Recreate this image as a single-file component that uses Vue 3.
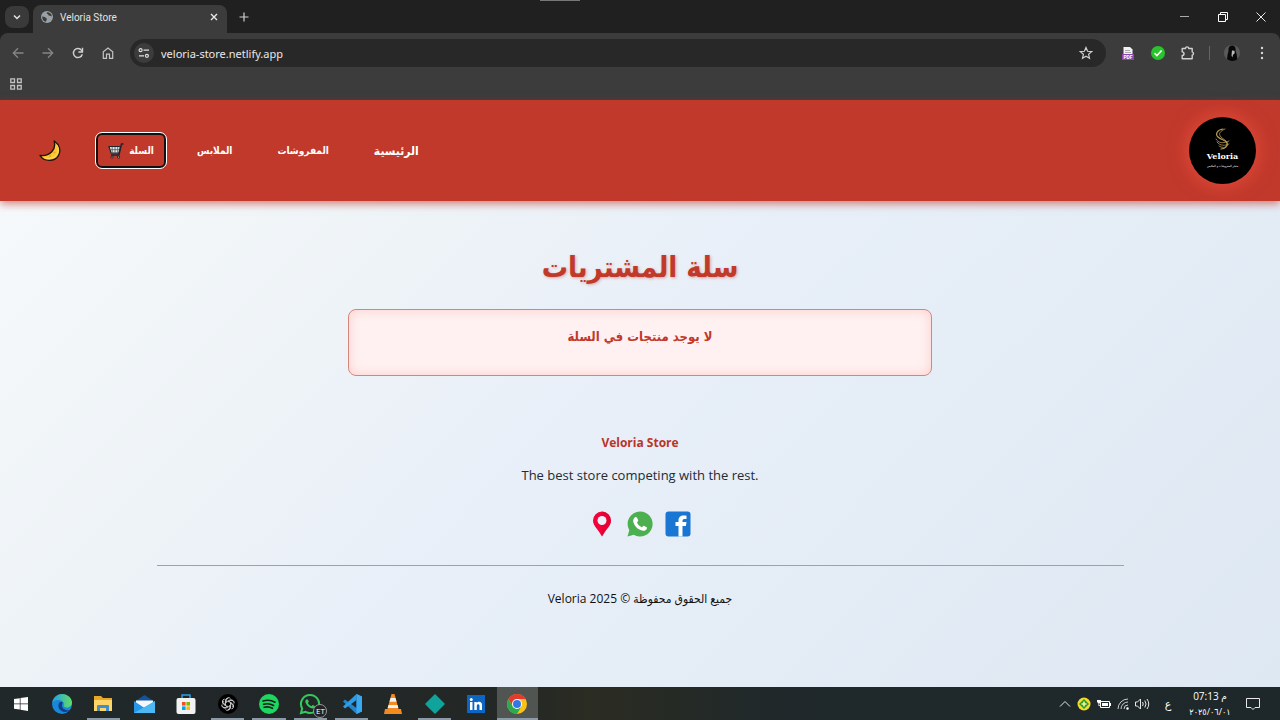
<script setup>
import { ref } from 'vue';

// browser chrome
const tabTitle = 'Veloria Store';
const url = ref('veloria-store.netlify.app');

// links after the cart button, left to right
const links = [
  { id: 'clothes', text: 'الملابس' },
  { id: 'furniture', text: 'المفروشات' },
  { id: 'home', text: 'الرئيسية' }
];

// taskbar apps
const apps = [
  { id: 'start', label: 'Start' },
  { id: 'edge', label: 'Edge' },
  { id: 'files', label: 'File Explorer', open: true },
  { id: 'mail', label: 'Mail' },
  { id: 'store', label: 'Store' },
  { id: 'gpt', label: 'ChatGPT', open: true },
  { id: 'spotify', label: 'Spotify', open: true },
  { id: 'whatsapp', label: 'WhatsApp', open: true },
  { id: 'code', label: 'VS Code', open: true },
  { id: 'vlc', label: 'VLC' },
  { id: 'diamond', label: 'Diamond', open: true },
  { id: 'linkedin', label: 'LinkedIn' },
  { id: 'chrome', label: 'Chrome', open: true, active: true }
];
</script>

<template>
  <div class="screen">
    <div class="tab-strip">
      <button class="tab-search" aria-label="Search tabs">
        <svg width="10" height="10" viewBox="0 0 10 10"><path d="M2 3.5l3 3 3-3" fill="none" stroke="#e3e3e3" stroke-width="1.5" /></svg>
      </button>
      <div class="tab">
        <svg width="12" height="12" viewBox="0 0 12 12">
          <circle cx="6" cy="6" r="6" fill="#9aa0a6" />
          <path d="M1.2 5.2c1 .8 2.6.2 3.2 1.2s1.6.6 1.4 2-1 1.2-.8 2.4C2.600 10.600 1 8.400 1.200 5.200zM6.200 1.200c-.8.8-.6 1.600.4 1.800s.2 1.400 1.400 1.600 1.400 1 2.800.6c0-2-2-4-4.600-4z" fill="#3c3c3c" />
        </svg>
        <span class="tab-title">{{ tabTitle }}</span>
        <button class="icon-btn" aria-label="Close tab">
          <svg width="8" height="8" viewBox="0 0 8 8"><path d="M1 1l6 6M7 1L1 7" stroke="#e8e8e8" stroke-width="1.400" /></svg>
        </button>
      </div>
      <button class="icon-btn new-tab" aria-label="New tab">
        <svg width="10" height="10" viewBox="0 0 10 10"><path d="M5 .5v9M.5 5h9" stroke="#d0d0d0" stroke-width="1.200" /></svg>
      </button>
      <div class="window-controls">
        <button class="icon-btn" aria-label="Minimize">
          <svg width="10" height="10" viewBox="0 0 10 10"><path d="M0 4.500h9" stroke="#aaa" /></svg>
        </button>
        <button class="icon-btn" aria-label="Restore">
          <svg width="10" height="10" viewBox="0 0 10 10"><path d="M.5 2.500h7v7h-7zM2.500 2.500v-2h7v7h-2" fill="none" stroke="#fff" /></svg>
        </button>
        <button class="icon-btn" aria-label="Close">
          <svg width="10" height="10" viewBox="0 0 10 10"><path d="M.5.5l9 9M9.500.5l-9 9" stroke="#e8e8e8" /></svg>
        </button>
      </div>
      <span class="grip"></span>
    </div>

    <div class="chrome-bar">
      <div class="toolbar">
        <div class="nav-buttons">
          <button class="icon-btn" aria-label="Back">
            <svg width="12" height="12" viewBox="0 0 12 12"><path d="M11.500 6H1.500M6 1.300L1.300 6 6 10.700" fill="none" stroke="#858585" stroke-width="1.300" /></svg>
          </button>
          <button class="icon-btn" aria-label="Forward">
            <svg width="12" height="12" viewBox="0 0 12 12"><path d="M.5 6h10M6 1.300L10.700 6 6 10.700" fill="none" stroke="#858585" stroke-width="1.300" /></svg>
          </button>
          <button class="icon-btn" aria-label="Reload">
            <svg width="12" height="12" viewBox="0 0 12 12">
              <path d="M10.300 7.200A4.500 4.500 0 1 1 9.600 3.400L10.500 4.500" fill="none" stroke="#d0d0d0" stroke-width="1.400" />
              <path d="M10.500.8v4.200H6.400" fill="none" stroke="#d0d0d0" stroke-width="1.400" />
            </svg>
          </button>
          <button class="icon-btn" aria-label="Home">
            <svg width="12" height="12" viewBox="0 0 12 12"><path d="M1.300 11.300V4.800L6 1l4.700 3.800v6.500H7.500V7.200h-3v4.100z" fill="none" stroke="#c4c4c4" stroke-width="1.200" /></svg>
          </button>
        </div>
        <div class="address">
          <button class="site-info" aria-label="Site information">
            <svg width="12" height="12" viewBox="0 0 12 12">
              <path d="M5.500 3.200H11M1 8.800h5" stroke="#e0e0e0" stroke-width="1.300" />
              <circle cx="2.600" cy="3.200" r="1.500" fill="none" stroke="#e0e0e0" stroke-width="1.200" />
              <circle cx="8.900" cy="8.800" r="1.500" fill="none" stroke="#e0e0e0" stroke-width="1.200" />
            </svg>
          </button>
          <input v-model="url" class="url" type="text" aria-label="Address" />
          <button class="icon-btn" aria-label="Bookmark">
            <svg width="14" height="14" viewBox="0 0 14 14"><path d="M7 1.500l1.600 3.800 4.100.3-3.100 2.700.9 4L7 10.200l-3.500 2.100.9-4-3.100-2.700 4.100-.3z" fill="none" stroke="#d0d0d0" stroke-width="1.200" /></svg>
          </button>
        </div>
        <div class="extensions">
          <button class="icon-btn" aria-label="PDF">
            <svg width="12" height="14" viewBox="0 0 12 14">
              <path d="M1.500 1H8l2.500 2.500V8h-9z" fill="#f4f2f6" />
              <path d="M3 4.500h5M3 6.500h6" stroke="#aaa" />
              <rect y="8" width="12" height="6" fill="#8e44ad" />
              <text x="6" y="13" text-anchor="middle" font-size="5" font-weight="700" font-family="Roboto, sans-serif" fill="#fff">PDF</text>
            </svg>
          </button>
          <button class="icon-btn" aria-label="Checker">
            <svg width="14" height="14" viewBox="0 0 14 14"><circle cx="7" cy="7" r="7" fill="#27c42b" /><path d="M3.500 7.200l2.400 2.300 4.700-5" fill="none" stroke="#fff" stroke-width="1.700" /></svg>
          </button>
          <button class="icon-btn" aria-label="Extensions">
            <svg width="14" height="14" viewBox="0 0 14 14"><path d="M1.200 2.500h3.300a1.600 1.600 0 0 1 3.200 0h3.500v3.400a1.700 1.700 0 0 1 0 3.300v3.600h-10V9.500a1.800 1.800 0 0 0 0-3.600z" fill="none" stroke="#d0d0d0" stroke-width="1.400" stroke-linejoin="round" /></svg>
          </button>
          <span class="divider"></span>
          <button class="icon-btn" aria-label="Profile">
            <svg width="16" height="16" viewBox="0 0 16 16">
              <circle cx="8" cy="8" r="8" fill="#5a5a5a" />
              <path d="M4.500 6C4 2 6 .5 8.200.5S12 2 11.600 6l1 3 .8 5.200A8 8 0 0 1 3 14l.5-4z" fill="#080808" />
              <path d="M8 5.500l2.500.2.200 2.600-1.700 1.400-.7 2.800-.8-2z" fill="#bbb" />
            </svg>
          </button>
          <button class="icon-btn" aria-label="Menu">
            <svg width="4" height="14" viewBox="0 0 4 14" fill="#d8d8d8"><circle cx="2" cy="2" r="1.200" /><circle cx="2" cy="7" r="1.200" /><circle cx="2" cy="12" r="1.200" /></svg>
          </button>
        </div>
      </div>
      <div class="bookmarks">
        <button class="icon-btn" aria-label="Apps">
          <svg width="12" height="12" viewBox="0 0 12 12" fill="none" stroke="#c4c4c4" stroke-width="1.300"><path d="M.8.8h3.700v3.700H.8zM7.500.8h3.700v3.700H7.500zM.8 7.500h3.700v3.700H.8zM7.500 7.500h3.700v3.700H7.500z" /></svg>
        </button>
      </div>
    </div>

    <header class="site-header">
      <nav class="menu">
        <button class="theme" aria-label="الوضع الليلي">
          <svg width="22" height="22" viewBox="0 0 22 22">
            <path d="M15.200 1c5 3.200 7.300 9.500 4.200 14.600C16 21.500 5.500 22.500 1 15.500c4.500.6 8.800-.6 11.800-3.700 2.900-3 3.400-6.800 2.400-10.800z" fill="#fcc62f" stroke="#1c1208" stroke-width="1.300" stroke-linejoin="round" />
            <path d="M18 5c2 3.500 1.600 7.500-.8 10.300-2.600 2.900-7 4-11 3" fill="none" stroke="#f9d976" stroke-width="1" />
            <circle cx="15.500" cy="12.500" r="1" fill="#e8a51c" /><circle cx="11" cy="16" r="1" fill="#e8a51c" />
          </svg>
        </button>
        <button class="cart-btn" dir="rtl">
          <span>السلة</span>
          <svg width="16" height="16" viewBox="0 0 16 16">
            <path d="M1 3.500h11.500l-1.500 6.500H3z" fill="#e2e6e9" stroke="#222529" stroke-width="1.200" />
            <path d="M4.200 4v6M7 4v6M9.700 4v6M1.500 6.700h10.500" stroke="#50565b" stroke-width=".8" />
            <path d="M15.500 1h-2l-2.600 11H3" fill="none" stroke="#222529" stroke-width="1.500" />
            <circle cx="4" cy="14" r="1.500" fill="#222529" /><circle cx="10.500" cy="14" r="1.500" fill="#222529" />
            <circle cx="4" cy="14" r=".6" fill="#ddd" /><circle cx="10.500" cy="14" r=".6" fill="#ddd" />
          </svg>
        </button>
        <a v-for="link in links" :key="link.id" href="#" class="link" :class="link.id" dir="rtl">{{ link.text }}</a>
      </nav>
      <div class="logo">
        <svg class="logo-mark" width="18" height="22" viewBox="0 0 18 22" fill="none" stroke="#b89a58" stroke-linecap="round">
          <path d="M9 1C3 2 1 6 4 9s8 3 9 6-2 6-6 6" stroke-width="1.200" />
          <path d="M11 1C6 3 4 6 7 9s8 4 6 9" stroke-width=".8" />
          <path d="M2 11c2 4 7 5 13 2M3 14c3 4 8 4 12 2M5 18c3 2 6 2 8 0" stroke-width=".8" />
        </svg>
        <span class="logo-name">Veloria</span>
        <span class="logo-sub" dir="rtl">متجر المفروشات و الملابس</span>
      </div>
    </header>

    <div class="page">
      <main class="cart">
        <h1 dir="rtl">سلة المشتريات</h1>
        <div class="empty-box">
          <p dir="rtl">لا يوجد منتجات في السلة</p>
        </div>
      </main>

      <footer class="footer">
        <h2>Veloria Store</h2>
        <p class="slogan">The best store competing with the rest.</p>
        <div class="social">
          <a href="#" aria-label="Location">
            <svg width="26" height="26" viewBox="0 0 26 26">
              <path d="M13 .5a9 9 0 0 0-9 9C4 15 9 18 13 25.500 17 18 22 15 22 9.500a9 9 0 0 0-9-9z" fill="#f4003a" />
              <path d="M13 .5a9 9 0 0 1 9 9C22 15 17 18 13 25.500z" fill="#dc0032" opacity=".6" />
              <circle cx="13" cy="9.500" r="4.500" fill="#eaf0f8" />
            </svg>
          </a>
          <a href="#" aria-label="WhatsApp">
            <svg width="26" height="26" viewBox="0 0 26 26">
              <path d="M13 .5A12.500 12.500 0 0 0 2.300 19.300L.5 25.500l6.300-1.700A12.500 12.500 0 1 0 13 .5z" fill="#4caf50" />
              <path d="M8 6.200c.7-.4 1.500-.4 1.900.3l1.300 2.800c.2.700-.9 1.600-1.200 2.200.9 2.200 2.500 3.700 4.800 4.700.6-.2 1.300-1.600 2-1.500l2.900 1.500c.6.500.2 1.700-.4 2.400-.7.900-2 1.400-3.300 1.200C11 18.900 7.200 15 6.200 10.500c-.2-1.700.7-3.500 1.800-4.300z" fill="#fff" />
            </svg>
          </a>
          <a href="#" aria-label="Facebook">
            <svg width="26" height="26" viewBox="0 0 26 26">
              <rect x=".5" y=".5" width="25" height="25" rx="3" fill="#1976d2" />
              <path d="M13.500 25.500V15H10.500v-4h3V9.500c0-3.500 2-5 5-5 1.500 0 2.500.1 3 .2V8h-2c-1.500 0-2 .8-2 2v1h4l-.6 4h-3.400v10.500z" fill="#fff" />
            </svg>
          </a>
        </div>
        <p class="rights" dir="rtl">جميع الحقوق محفوظة © 2025 Veloria</p>
      </footer>
    </div>

    <div class="taskbar">
      <div class="apps">
        <button v-for="app in apps" :key="app.id" class="app" :class="{ open: app.open, active: app.active }" :aria-label="app.label">
          <svg v-if="app.id === 'start'" width="16" height="16" viewBox="0 0 16 16" fill="#fff"><path d="M1 3l5.800-.8v5.300H1zM7.500 2L15 1v6.500H7.500zM1 8.300h5.800v5.300L1 12.800zM7.500 8.300H15V15l-7.500-1.200z" /></svg>
          <svg v-else-if="app.id === 'edge'" width="20" height="20" viewBox="0 0 20 20">
            <defs>
              <linearGradient id="edgeTop" x1="0" y1="0" x2="1" y2="0"><stop offset="0" stop-color="#229fe5" /><stop offset="1" stop-color="#63dc62" /></linearGradient>
            </defs>
            <circle cx="10" cy="10" r="10" fill="#1988d8" />
            <path d="M.2 9C1 3.500 5 0 10 0c6 0 10 4.500 10 8.700 0 3-2.500 4.800-5.500 4.800-2 0-3.300-1-2.800-2.200C13 8 9 5.500 5.500 6 3 6.200 1.200 7.500.2 9z" fill="url(#edgeTop)" />
            <path d="M7.500 8.500c-3 4 .5 9.500 5.500 9.500 2 0 4-.8 5.300-2-3.300 1-8.300-.5-8.300-4.500 0-2 1-2.500.5-3.300-.8-1-2.300-.5-3 .3z" fill="#123f86" />
          </svg>
          <svg v-else-if="app.id === 'files'" width="20" height="18" viewBox="0 0 20 18">
            <path d="M1 1h7l2 2h9v13H1z" fill="#e9a928" /><path d="M1 5h18v11H1z" fill="#ffd567" />
            <path d="M4 16v-5q0-1 1-1h10q1 0 1 1v5h-3v-3H7v3z" fill="#3d8fd1" />
          </svg>
          <svg v-else-if="app.id === 'mail'" width="21" height="20" viewBox="0 0 21 20">
            <path d="M0 8l10.500-7L21 8v3H0z" fill="#1452a0" /><path d="M2 6.500h17V14H2z" fill="#f4f8fc" />
            <path d="M0 7l10.500 7L21 7v12H0z" fill="#2497e8" /><path d="M0 19L21 7v12z" fill="#4bb8f3" />
          </svg>
          <svg v-else-if="app.id === 'store'" width="20" height="20" viewBox="0 0 20 20">
            <path d="M6 5V1h8v4" fill="none" stroke="#2aa0e6" stroke-width="1.500" /><rect x=".5" y="4" width="19" height="16" rx="2" fill="#f2f2f2" />
            <path d="M6 8h3.600v3.600H6z" fill="#f25022" /><path d="M10.400 8H14v3.600h-3.600z" fill="#7fba00" /><path d="M6 12.400h3.600V16H6z" fill="#00a4ef" /><path d="M10.400 12.400H14V16h-3.600z" fill="#ffb900" />
          </svg>
          <svg v-else-if="app.id === 'gpt'" width="20" height="20" viewBox="0 0 20 20">
            <circle cx="10" cy="10" r="10" fill="#000" />
            <g fill="none" stroke="#e8e8e8" stroke-width=".8">
              <path v-for="n in 6" :key="n" :transform="`rotate(${n * 60} 10 10)`" d="M8.200 9V5.800a2.400 2.400 0 0 1 4.300-1.200M8.200 8l3.200-1.800a2.400 2.400 0 0 1 3.400 1.200" />
            </g>
          </svg>
          <svg v-else-if="app.id === 'spotify'" width="20" height="20" viewBox="0 0 20 20">
            <circle cx="10" cy="10" r="10" fill="#1ed760" />
            <path d="M4 7c4-1.200 8.500-.8 12 1.200M4.600 10.300c3.500-1 7-.6 10 1.100M5.200 13.300c3-.8 5.800-.4 8.200 1" fill="none" stroke="#17211c" stroke-width="1.700" stroke-linecap="round" />
          </svg>
          <span v-else-if="app.id === 'whatsapp'" class="wa">
            <svg width="22" height="22" viewBox="0 0 22 22">
              <path d="M11 2a9 9 0 0 0-7.800 13.500L2 20l4.600-1.200A9 9 0 1 0 11 2z" fill="none" stroke="#35c85c" stroke-width="2" />
              <path d="M7.500 6.500c.5-.4 1.200-.3 1.500.3l.8 1.900-.9 1.400c.8 1.500 1.800 2.500 3.500 3.200l1.300-1.300 2.200 1.100c.3.900-.7 2.100-2 2.300-3.600 0-7.500-4-7.600-6.900 0-.9.500-1.600 1.200-2z" fill="#35c85c" />
            </svg>
            <span class="wa-badge">ET</span>
          </span>
          <svg v-else-if="app.id === 'code'" width="20" height="20" viewBox="0 0 20 20">
            <path d="M14.500 0L20 2.500v15L14.500 20 1 7.500 3 5.500 14.500 14z" fill="#1f86cf" /><path d="M14.500 0v6L3 14.500l-2-2z" fill="#2f9be6" /><path d="M14.500 0L20 2.500v15L14.500 20z" fill="#3ba9f2" />
          </svg>
          <svg v-else-if="app.id === 'vlc'" width="18" height="20" viewBox="0 0 18 20">
            <path d="M1 15h16l1 5H0z" fill="#f58a1f" /><path d="M7.500 0h3L15 16.500q-6 2.500-12 0z" fill="#f58a1f" />
            <path d="M6.500 4h5l1 3.800h-7zM4.500 11h9l.8 3H3.700z" fill="#f2f2f2" />
          </svg>
          <svg v-else-if="app.id === 'diamond'" width="20" height="20" viewBox="0 0 20 20"><path d="M10 1l9 9-9 9-9-9z" fill="#10a39b" stroke="#10a39b" stroke-width="1.500" stroke-linejoin="round" /></svg>
          <svg v-else-if="app.id === 'linkedin'" width="18" height="18" viewBox="0 0 18 18">
            <path d="M0 0h18v18H0z" fill="#0a66c2" />
            <path d="M3 7h2.500v8H3zM7.300 7h2.400v1.100c1.400-2 5.300-1.700 5.300 2V15h-2.500v-4.300c0-2.100-2.700-2-2.700 0V15H7.300z" fill="#fff" /><circle cx="4.250" cy="4.400" r="1.500" fill="#fff" />
          </svg>
          <svg v-else width="20" height="20" viewBox="0 0 20 20">
            <circle cx="10" cy="10" r="10" fill="#fbc116" />
            <path d="M1.340 5A10 10 0 0 1 18.660 5H10v5L5.670 12.500z" fill="#e33b2e" />
            <path d="M1.340 5A10 10 0 0 0 10 20l4.330-7.500L10 10l-4.330 2.500z" fill="#2da94f" />
            <circle cx="10" cy="10" r="5" fill="#fff" /><circle cx="10" cy="10" r="4" fill="#3178e6" />
          </svg>
        </button>
      </div>
      <div class="tray">
        <svg width="12" height="12" viewBox="0 0 12 12"><path d="M1 8.500l5-5 5 5" fill="none" stroke="#e8e8e8" /></svg>
        <svg width="14" height="14" viewBox="0 0 14 14"><circle cx="7" cy="7" r="6.500" fill="#f5dc2a" /><path d="M7 2L12 7l-5 5-5-5z" fill="#2e9b32" /><path d="M7 4.500v5M4.500 7h5" stroke="#f8f3a0" stroke-width="1.600" /></svg>
        <svg width="14" height="12" viewBox="0 0 14 12"><path d="M3.500 3.500h9v6h-9z" fill="none" stroke="#fff" /><path d="M5 5h6v3H5z" fill="#fff" /><path d="M13 5h1v3h-1zM0 2h4v1.500L3 5.500H1L0 3.500zM1.500 5v3H3" fill="#fff" /></svg>
        <svg width="12" height="12" viewBox="0 0 12 12" fill="none" stroke="#ccc"><path d="M1 11A10 10 0 0 1 11 1M4 11a7 7 0 0 1 7-7M7 11a4 4 0 0 1 4-4" /><circle cx="10.500" cy="10.500" r="1" fill="#fff" /></svg>
        <svg width="15" height="12" viewBox="0 0 15 12" fill="none" stroke="#e8e8e8"><path d="M.5 4h2l3-3v10l-3-3h-2zM7.500 4q1.500 2 0 4M9.800 2.500q2.500 3.500 0 7M12 1q3.500 5 0 10" /></svg>
        <span class="lang">ع</span>
        <div class="clock">
          <span>07:13 م</span>
          <span class="date">٢٠٢٥/٠٦/٠١</span>
        </div>
        <svg width="14" height="14" viewBox="0 0 14 14"><path d="M.5 1.500h13v9H9L7 12.500l-2-2H.5z" fill="none" stroke="#e8e8e8" /></svg>
      </div>
    </div>
  </div>
</template>

<style>
body {
  margin: 0;
  font-family: "Open Sans", "DejaVu Sans", sans-serif;
}
</style>

<style scoped>
.screen {
  display: flex;
  flex-direction: column;
  min-height: 100vh;
}

button {
  border: none;
  background: none;
  padding: 0;
  font-family: inherit;
}

svg {
  display: block;
  flex: none;
}

.icon-btn {
  display: flex;
  align-items: center;
  justify-content: center;
}

/* browser */
.tab-strip {
  position: relative;
  display: flex;
  align-items: center;
  height: 33px;
  padding: 0 14px 0 5px;
  background: #202020;
}

.tab-search {
  display: flex;
  align-items: center;
  justify-content: center;
  width: 24px;
  height: 22px;
  border-radius: 8px;
  background: #3a3a3a;
}

.tab {
  display: flex;
  align-items: center;
  align-self: flex-end;
  gap: 7px;
  width: 177px;
  height: 24px;
  margin-left: 4px;
  padding: 0 9px 4px 8px;
  border-radius: 8px 8px 0 0;
  background: #3c3c3c;
}

.tab-title {
  flex: 1;
  font-family: Roboto, sans-serif;
  font-size: 10px;
  color: #e3e3e3;
}

.new-tab {
  margin-left: 12px;
}

.window-controls {
  display: flex;
  gap: 28px;
  margin-left: auto;
}

.grip {
  position: absolute;
  top: 0;
  left: 540px;
  width: 40px;
  height: 1px;
  background: #777;
}

.chrome-bar {
  border-radius: 8px 8px 0 0;
  background: #3c3c3c;
  box-shadow: 0 -8px 0 #202020;
}

.toolbar {
  display: flex;
  align-items: center;
  height: 40px;
  padding: 0 16px 0 12px;
}

.nav-buttons {
  display: flex;
  gap: 18px;
}

.address {
  display: flex;
  flex: 1;
  align-items: center;
  height: 28px;
  margin-left: 16px;
  padding: 0 13px 0 4px;
  border-radius: 14px;
  background: #282828;
}

.site-info {
  display: flex;
  align-items: center;
  justify-content: center;
  width: 20px;
  height: 20px;
  border-radius: 50%;
  background: #3c3c3c;
}

.url {
  flex: 1;
  margin-left: 7px;
  padding: 0;
  border: none;
  outline: none;
  background: none;
  font-family: "Noto Sans", sans-serif;
  font-size: 11px;
  color: #e8e8e8;
}

.extensions {
  display: flex;
  align-items: center;
  gap: 16px;
  margin-left: 16px;
}

.divider {
  width: 1px;
  height: 14px;
  margin: 0 -2px;
  background: #666;
}

.extensions button:last-child {
  margin-left: 4px;
}

.extensions button:first-child {
  margin-right: 1px;
}

.bookmarks {
  display: flex;
  align-items: flex-start;
  height: 27px;
  padding: 5px 10px;
  box-sizing: border-box;
}

/* header */
.site-header {
  position: relative;
  display: flex;
  align-items: center;
  justify-content: space-between;
  height: 101px;
  padding: 0 24px 0 39px;
  background: #c0392b;
  box-shadow: 0 3px 8px rgba(192, 57, 43, 0.6);
}

.menu {
  display: flex;
  align-items: center;
  gap: 17px;
}

.theme {
  margin-right: 18px;
}

.cart-btn {
  display: flex;
  align-items: center;
  justify-content: center;
  gap: 5px;
  width: 70px;
  height: 35px;
  border: 2px solid #111;
  border-radius: 6px;
  outline: 1px solid #fff;
  font-family: "DejaVu Sans Condensed", "DejaVu Sans", sans-serif;
  font-size: 10px;
  font-weight: 700;
  color: #fff;
}

.link {
  padding: 0 14px;
  font-family: "DejaVu Sans Condensed", "DejaVu Sans", sans-serif;
  font-size: 10px;
  font-weight: 700;
  text-align: center;
  text-decoration: none;
  white-space: nowrap;
  color: #fff;
}

.link.home {
  font-size: 12px;
}

.logo {
  display: flex;
  flex-direction: column;
  align-items: center;
  width: 67px;
  height: 67px;
  padding-top: 11px;
  box-sizing: border-box;
  border-radius: 50%;
  background: #000;
  box-shadow: 0 0 20px rgba(255, 87, 70, 0.7);
  color: #fff;
}

.logo-name {
  font-family: "DejaVu Serif", serif;
  font-size: 8px;
  font-weight: 700;
  line-height: 13px;
}

.logo-sub {
  font-family: "DejaVu Sans Condensed", "DejaVu Sans", sans-serif;
  font-size: 3px;
  line-height: 6px;
}

/* page */
.page {
  flex: 1;
  background: linear-gradient(135deg, #f6f9fb, #eef3f7 25%, #e8eff8 45%, #dee8f2);
  text-align: center;
}

.cart {
  padding-top: 44px;
}

h1 {
  margin: 0;
  font-family: "DejaVu Sans Condensed", "DejaVu Sans", sans-serif;
  font-size: 29px;
  line-height: 44px;
  color: #c0392b;
  text-shadow: 1px 1px 3px rgba(192, 57, 43, 0.4);
}

.empty-box {
  width: 584px;
  max-width: 90%;
  height: 67px;
  margin: 20px auto 0;
  padding-top: 16px;
  box-sizing: border-box;
  border: 1px solid #d9837b;
  border-radius: 8px;
  background: #fff1f1;
  box-shadow: inset 0 0 12px rgba(231, 76, 60, 0.2);
}

.empty-box p {
  margin: 0;
  font-family: "DejaVu Sans Condensed", "DejaVu Sans", sans-serif;
  font-size: 13px;
  font-weight: 700;
  line-height: 22px;
  color: #c0392b;
}

.footer {
  padding-top: 56px;
}

h2 {
  margin: 0;
  font-size: 12px;
  line-height: 22px;
  color: #b93428;
}

.slogan {
  margin: 10px 0 0;
  font-size: 13px;
  line-height: 22px;
  color: #222b35;
}

.social {
  display: flex;
  justify-content: center;
  gap: 12px;
  margin-top: 25px;
}

.rights {
  width: 967px;
  max-width: 90%;
  margin: 28px auto 0;
  padding-top: 22px;
  border-top: 1px solid #d28d88;
  font-family: "Open Sans", "DejaVu Sans Condensed", "DejaVu Sans", sans-serif;
  font-size: 12px;
  line-height: 22px;
  color: #111;
}

/* taskbar */
.taskbar {
  display: flex;
  justify-content: space-between;
  height: 33px;
  background: linear-gradient(90deg, #20282a, #232726 40%, #2b2c22 46%, #20282a 60%, #1e282b);
}

.apps {
  display: grid;
  grid-template-columns: repeat(13, 1fr);
  width: 538px;
}

.app {
  display: flex;
  align-items: center;
  justify-content: center;
  margin: 0 4px;
  border-top: 2px solid transparent;
  border-bottom: 2px solid transparent;
}

.app.open {
  border-bottom-color: #8c9aa8;
}

.app.active {
  margin: 0;
  border-top-color: #515552;
  background: #515552;
}

.wa {
  position: relative;
}

.wa-badge {
  position: absolute;
  right: -6px;
  bottom: -3px;
  width: 12px;
  height: 12px;
  border: 1px solid #999;
  border-radius: 50%;
  background: #222;
  font-size: 8px;
  line-height: 12px;
  color: #fff;
}

.tray {
  display: flex;
  align-items: center;
  gap: 6px;
  padding-right: 20px;
  color: #fff;
}

.lang {
  width: 24px;
  font-size: 11px;
  text-align: center;
}

.clock {
  display: flex;
  flex-direction: column;
  align-items: center;
  width: 48px;
  font-family: "Open Sans", "DejaVu Sans Condensed", "DejaVu Sans", sans-serif;
  font-size: 10px;
  line-height: 15px;
  white-space: nowrap;
}

.date {
  font-size: 9px;
}

.tray > svg:last-child {
  margin-left: 6px;
}
</style>
